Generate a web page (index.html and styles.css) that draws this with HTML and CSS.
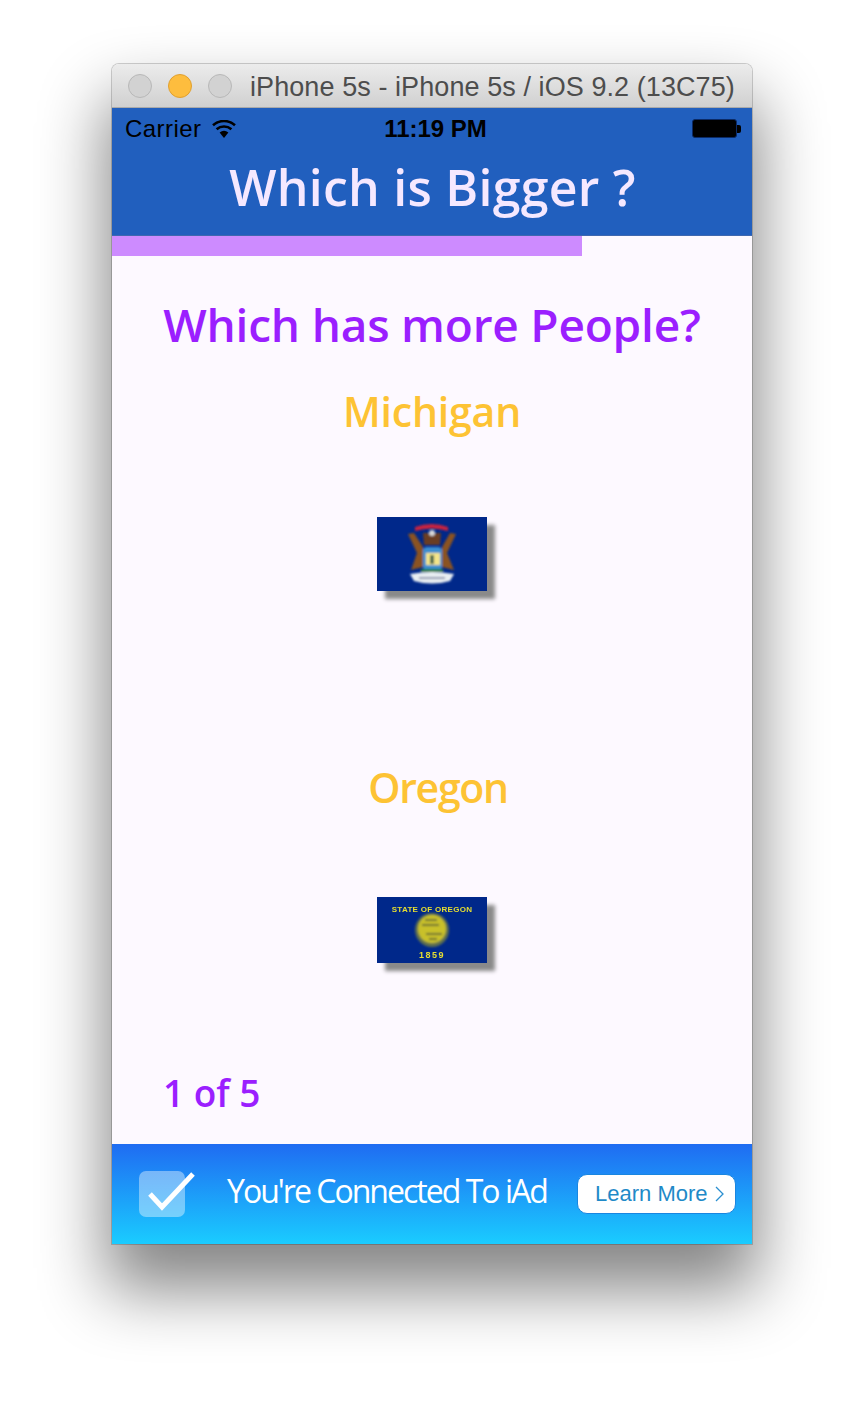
FILE: index.html
```html
<!DOCTYPE html>
<html lang="en">
<head>
<meta charset="utf-8">
<title>Which is Bigger ?</title>
<link rel="stylesheet" href="styles.css">
</head>
<body>
<div class="window">
  <div class="titlebar">
    <span class="light"></span>
    <span class="light light-min"></span>
    <span class="light"></span>
    <span class="title">iPhone 5s - iPhone 5s / iOS 9.2 (13C75)</span>
  </div>
  <div class="screen">
    <header class="header">
      <div class="status">
        <div class="status-left">
          <span class="carrier">Carrier</span>
          <svg class="wifi" width="24" height="18" viewBox="0 0 24 18"><path d="M12 18 L7.6 12.6 A7 7 0 0 1 16.4 12.6 Z" fill="#000"/><path d="M4.6 9.2 A11.4 11.4 0 0 1 19.4 9.2" fill="none" stroke="#000" stroke-width="2.6"/><path d="M1 5.2 A16.6 16.6 0 0 1 23 5.2" fill="none" stroke="#000" stroke-width="2.6"/></svg>
        </div>
        <span class="time">11:19 PM</span>
        <div class="battery"><span class="battery-body"></span><span class="battery-tip"></span></div>
      </div>
      <h1 class="app-title">Which is Bigger ?</h1>
    </header>
    <div class="track"><div class="fill" style="width:470px"></div></div>
    <main class="content">
      <h2 class="question">Which has more People?</h2>
      <div class="choice choice-a">
        <div class="name">Michigan</div>
        <svg class="flag" width="110" height="74" viewBox="0 0 110 74">
          <rect width="110" height="74" fill="#00288a"/>
          <g filter="url(#soft)">
            <path d="M38 10 Q55 4 71 10 L71 14 Q55 9 38 14 Z" fill="#c8243f"/>
            <path d="M46 16 L64 16 L63 28 L47 28 Z" fill="#6b3c20"/>
            <circle cx="55" cy="16" r="3" fill="#d8d8d8"/>
            <path d="M31 17 L37 16 L46 30 L46 50 L34 53 L40 36 Z" fill="#8a5220"/>
            <path d="M79 17 L73 16 L65 30 L65 50 L77 53 L70 36 Z" fill="#8a5220"/>
            <rect x="46" y="30" width="19" height="23" rx="4" fill="#3e8fd0"/>
            <rect x="49" y="36" width="14" height="12" fill="#f3e58a"/>
            <rect x="53" y="38" width="4" height="9" fill="#4a6a50"/>
            <rect x="44" y="52" width="22" height="3" fill="#1f7a3a"/>
            <path d="M33 57 Q55 53 77 57 L73 64 Q55 69 37 64 Z" fill="#e8eef2"/>
            <path d="M42 61 H68" stroke="#7a83a0" stroke-width="1.6"/>
          </g>
        </svg>
      </div>
      <div class="choice choice-b">
        <div class="name name-b">Oregon</div>
        <svg class="flag" width="110" height="66" viewBox="0 0 110 66">
          <rect width="110" height="66" fill="#00288a"/>
          <g filter="url(#soft-text)">
            <text class="flag-text" x="55" y="15" text-anchor="middle">STATE OF OREGON</text>
            <text class="flag-text flag-year" x="55" y="61" text-anchor="middle">1859</text>
          </g>
          <g filter="url(#soft)">
            <circle cx="55" cy="33" r="17" fill="#5f7050"/>
            <circle cx="55" cy="32" r="14" fill="#c8c02c"/>
            <path d="M45 28 H62 M49 37 H65 M48 23 H60 M52 42 H60" stroke="#6a6f30" stroke-width="2"/>
          </g>
        </svg>
      </div>
      <div class="count">1 of 5</div>
    </main>
    <footer class="ad">
      <div class="ad-left">
        <div class="check">
          <svg class="tick" width="46" height="46" viewBox="0 0 46 46"><path d="M11 23 L23 36 L54 3" fill="none" stroke="#fff" stroke-width="5"/></svg>
        </div>
        <span class="ad-text">You're Connected To iAd</span>
      </div>
      <div class="learn">
        <span>Learn More</span>
        <svg width="9" height="16" viewBox="0 0 9 16"><path d="M1 1 L8 8 L1 15" fill="none" stroke="#2a8fd0" stroke-width="1.3"/></svg>
      </div>
    </footer>
  </div>
</div>
<svg class="defs" width="0" height="0"><defs><filter id="soft" x="-10%" y="-10%" width="120%" height="120%"><feGaussianBlur stdDeviation="1"/></filter><filter id="soft-text" x="-10%" y="-30%" width="120%" height="160%"><feGaussianBlur stdDeviation=".7"/></filter></defs></svg>
</body>
</html>
```
FILE: styles.css
```css
html, body {
  margin: 0;
  padding: 0;
  background: #fff;
}
body {
  height: 1404px;
  overflow: hidden;
  padding: 64px 112px 0;
  box-sizing: border-box;
  font-family: "Liberation Sans", sans-serif;
}
.defs { display: block; }
.window {
  width: 640px;
  height: 1180px;
  display: flex;
  flex-direction: column;
  border-radius: 7px 7px 0 0;
  box-shadow: 0 0 0 1px rgba(0,0,0,.18), 0 40px 66px 6px rgba(0,0,0,.48);
}
.titlebar {
  height: 44px;
  flex: none;
  box-sizing: border-box;
  display: flex;
  align-items: center;
  gap: 16px;
  padding-left: 16px;
  background: linear-gradient(#ececec, #d0d0d0);
  border-radius: 7px 7px 0 0;
  border-bottom: 1px solid #aaa;
}
.light {
  width: 24px;
  height: 24px;
  box-sizing: border-box;
  border-radius: 50%;
  background: #d2d2d2;
  border: 1px solid #b8b8b8;
}
.light-min {
  background: #fdbd3e;
  border-color: #e0a030;
}
.title {
  margin: 3px 0 0 2px;
  font-size: 27px;
  letter-spacing: .08px;
  color: #4d4d4d;
  white-space: nowrap;
}
.screen {
  flex: 1;
  display: flex;
  flex-direction: column;
  background: #fdf9ff;
}
.header {
  height: 128px;
  flex: none;
  background: #215fbe;
  display: flex;
  flex-direction: column;
  box-sizing: border-box;
  border-bottom: 1px solid #3f68b0;
}
.status {
  height: 41px;
  flex: none;
  display: grid;
  grid-template-columns: 1fr auto 1fr;
  align-items: center;
  padding: 0 11px 0 13px;
  font-size: 24px;
  color: #000;
}
.status-left {
  display: flex;
  align-items: center;
  gap: 10px;
}
.carrier {
  letter-spacing: .45px;
}
.time {
  margin-left: 5px;
  font-weight: 700;
}
.battery {
  justify-self: end;
  display: flex;
  align-items: center;
}
.battery-body {
  width: 45px;
  height: 19px;
  box-sizing: border-box;
  background: #000;
  border: 1px solid #0b2a66;
  border-radius: 3px;
  box-shadow: inset 0 0 0 1px #000;
}
.battery-tip {
  width: 4px;
  height: 8px;
  background: #000;
  border-radius: 0 2px 2px 0;
}
.app-title {
  margin: 0 0 0 1px;
  font-family: "Open Sans", sans-serif;
  font-weight: 600;
  font-size: 50px;
  letter-spacing: .25px;
  line-height: 76px;
  text-align: center;
  color: #f5e8ff;
}
.track {
  height: 20px;
  flex: none;
}
.fill {
  height: 100%;
  background: #cd8bff;
}
.content {
  flex: 1;
  display: flex;
  flex-direction: column;
  align-items: center;
  font-family: "Open Sans", sans-serif;
}
.question {
  margin: 38px 0 0;
  font-size: 46px;
  letter-spacing: -.2px;
  line-height: 60px;
  font-weight: 600;
  color: #9b1fff;
  white-space: nowrap;
}
.choice {
  display: flex;
  flex-direction: column;
  align-items: center;
}
.choice-a {
  margin-top: 29px;
  height: 349px;
}
.name {
  font-size: 41px;
  letter-spacing: -.2px;
  line-height: 56px;
  font-weight: 600;
  color: #fdc334;
}
.name-b {
  margin-left: 12px;
  letter-spacing: -1.3px;
}
.flag {
  display: block;
  margin-top: 78px;
  box-shadow: 8px 8px 4px #8a8a8a;
}
.choice-b {
  margin-top: 27px;
}
.choice-b .flag {
  margin-top: 82px;
}
.flag-text {
  font-family: "Liberation Sans", sans-serif;
  font-size: 8px;
  font-weight: 700;
  letter-spacing: .3px;
  fill: #e6de30;
}
.flag-year {
  font-size: 9px;
  letter-spacing: 1.5px;
}
.count {
  align-self: flex-start;
  margin: auto 0 27px 51px;
  font-size: 37px;
  line-height: 48px;
  font-weight: 600;
  color: #9b1fff;
}
.ad {
  height: 100px;
  flex: none;
  display: flex;
  align-items: center;
  justify-content: space-between;
  padding: 0 16px 0 27px;
  background: linear-gradient(#1f6cf2, #1accff);
}
.ad-left {
  display: flex;
  align-items: center;
  gap: 42px;
}
.check {
  width: 46px;
  height: 46px;
  position: relative;
  border-radius: 7px;
  background: rgba(255,255,255,.4);
}
.tick {
  position: absolute;
  left: 0;
  top: 0;
  overflow: visible;
}
.ad-text {
  margin-top: -7px;
  font-family: "Open Sans", sans-serif;
  font-size: 32px;
  letter-spacing: -1.98px;
  color: #fff;
  white-space: nowrap;
}
.learn {
  width: 159px;
  height: 40px;
  box-sizing: border-box;
  display: flex;
  align-items: center;
  gap: 7px;
  padding-left: 17px;
  background: #fff;
  border: 1px solid #1a86e0;
  border-radius: 10px;
  font-size: 22px;
  color: #1f8ac8;
}
```
